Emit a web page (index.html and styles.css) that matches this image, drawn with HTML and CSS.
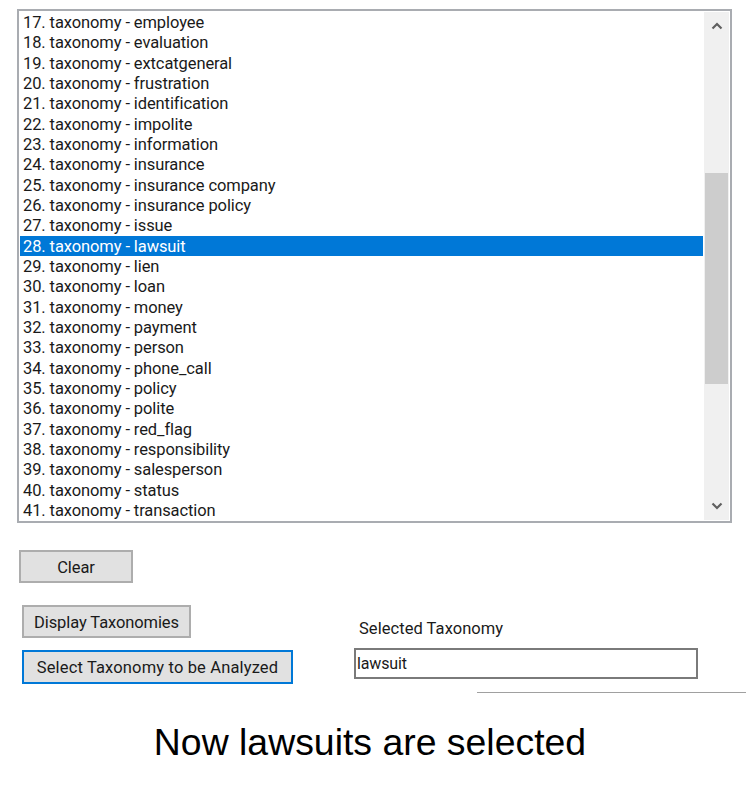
FILE: index.html
```html
<!DOCTYPE html>
<html>
<head>
<meta charset="utf-8">
<link rel="stylesheet" href="styles.css">
</head>
<body>
<div class="page">
  <div class="listbox">
    <ul class="items">
      <li>17. taxonomy - employee</li>
      <li>18. taxonomy - evaluation</li>
      <li>19. taxonomy - extcatgeneral</li>
      <li>20. taxonomy - frustration</li>
      <li>21. taxonomy - identification</li>
      <li>22. taxonomy - impolite</li>
      <li>23. taxonomy - information</li>
      <li>24. taxonomy - insurance</li>
      <li>25. taxonomy - insurance company</li>
      <li>26. taxonomy - insurance policy</li>
      <li>27. taxonomy - issue</li>
      <li class="selected">28. taxonomy - lawsuit</li>
      <li>29. taxonomy - lien</li>
      <li>30. taxonomy - loan</li>
      <li>31. taxonomy - money</li>
      <li>32. taxonomy - payment</li>
      <li>33. taxonomy - person</li>
      <li>34. taxonomy - phone_call</li>
      <li>35. taxonomy - policy</li>
      <li>36. taxonomy - polite</li>
      <li>37. taxonomy - red_flag</li>
      <li>38. taxonomy - responsibility</li>
      <li>39. taxonomy - salesperson</li>
      <li>40. taxonomy - status</li>
      <li>41. taxonomy - transaction</li>
    </ul>
    <div class="scrollbar">
      <div class="arrow">
        <svg width="12" height="8" viewBox="0 0 12 8"><path d="M1.5 6.5 L6 2 L10.5 6.5" fill="none" stroke="#606060" stroke-width="2.2"/></svg>
      </div>
      <div class="track">
        <div class="thumb"></div>
      </div>
      <div class="arrow">
        <svg width="12" height="8" viewBox="0 0 12 8"><path d="M1.5 1.5 L6 6 L10.5 1.5" fill="none" stroke="#606060" stroke-width="2.2"/></svg>
      </div>
    </div>
  </div>

  <button class="btn btn-clear">Clear</button>

  <div class="lower">
    <div class="buttons">
      <button class="btn btn-display">Display Taxonomies</button>
      <button class="btn btn-select">Select Taxonomy to be Analyzed</button>
    </div>
    <div class="field">
      <div class="label">Selected Taxonomy</div>
      <div class="textbox">lawsuit</div>
    </div>
  </div>
  <div class="rule"></div>

  <p class="caption">Now lawsuits are selected</p>
</div>
</body>
</html>
```

FILE: styles.css
```css
html, body {
  margin: 0;
  padding: 0;
  background: #ffffff;
}

.page {
  width: 746px;
  height: 787px;
  padding-top: 9px;
  box-sizing: border-box;
  font-family: Roboto, "Open Sans", "DejaVu Sans", sans-serif;
  color: #1a1a1a;
}

.listbox {
  margin-left: 17px;
  width: 715px;
  height: 514px;
  box-sizing: border-box;
  border: 2px solid #a9acb1;
  display: flex;
  padding: 1px;
  background: #fff;
}

.items {
  list-style: none;
  margin: 0;
  padding: 0;
  width: 683px;
}

.items li {
  box-sizing: border-box;
  height: 20.33px;
  padding-top: 1px;
  line-height: 19.33px;
  padding-left: 3px;
  font-size: 16.5px;
  letter-spacing: -0.1px;
  white-space: nowrap;
  color: #1a1a1a;
}

.items li.selected {
  background: #0078d7;
  color: #ffffff;
}

.scrollbar {
  margin-left: 1px;
  width: 25px;
  background: #f0f0f0;
  display: flex;
  flex-direction: column;
}

.arrow {
  height: 28px;
  display: flex;
  align-items: center;
  justify-content: center;
}

.track {
  flex: 1;
  padding-top: 133px;
}

.thumb {
  margin-left: 1px;
  width: 23px;
  height: 211px;
  background: #cdcdcd;
}

.btn {
  display: block;
  font-family: Roboto, "Open Sans", sans-serif;
  font-size: 16.5px;
  letter-spacing: -0.1px;
  color: #1a1a1a;
  background: #e1e1e1;
  border: 2px solid #adadad;
  box-sizing: border-box;
  padding: 1px 0 0 0;
  margin: 0;
}

.btn-clear {
  margin-top: 27px;
  margin-left: 19px;
  width: 114px;
  height: 33px;
}

.lower {
  display: flex;
  margin-top: 22px;
}

.buttons {
  margin-left: 22px;
  display: flex;
  flex-direction: column;
  gap: 12px;
}

.btn-display {
  width: 169px;
  height: 33px;
}

.btn-select {
  width: 271px;
  height: 34px;
  border: 2px solid #0078d7;
  letter-spacing: 0.15px;
}

.field {
  margin-left: 61px;
  padding-top: 14px;
}

.label {
  margin-left: 5px;
  font-size: 16.5px;
  letter-spacing: 0.05px;
  line-height: 20px;
  color: #1a1a1a;
}

.textbox {
  margin-top: 9px;
  width: 344px;
  height: 31px;
  box-sizing: border-box;
  border: 2px solid #7a7a7a;
  padding-left: 1px;
  padding-top: 1px;
  font-size: 16px;
  letter-spacing: -0.15px;
  line-height: 26px;
  color: #1a1a1a;
}

.rule {
  margin-top: 8px;
  margin-left: 477px;
  width: 269px;
  height: 1px;
  background: #a0a0a0;
}

.caption {
  margin: 28px 0 0 0;
  text-align: center;
  padding-right: 6px;
  font-family: "Liberation Sans", Arial, sans-serif;
  font-size: 37.4px;
  line-height: 42px;
  color: #000;
}
```
